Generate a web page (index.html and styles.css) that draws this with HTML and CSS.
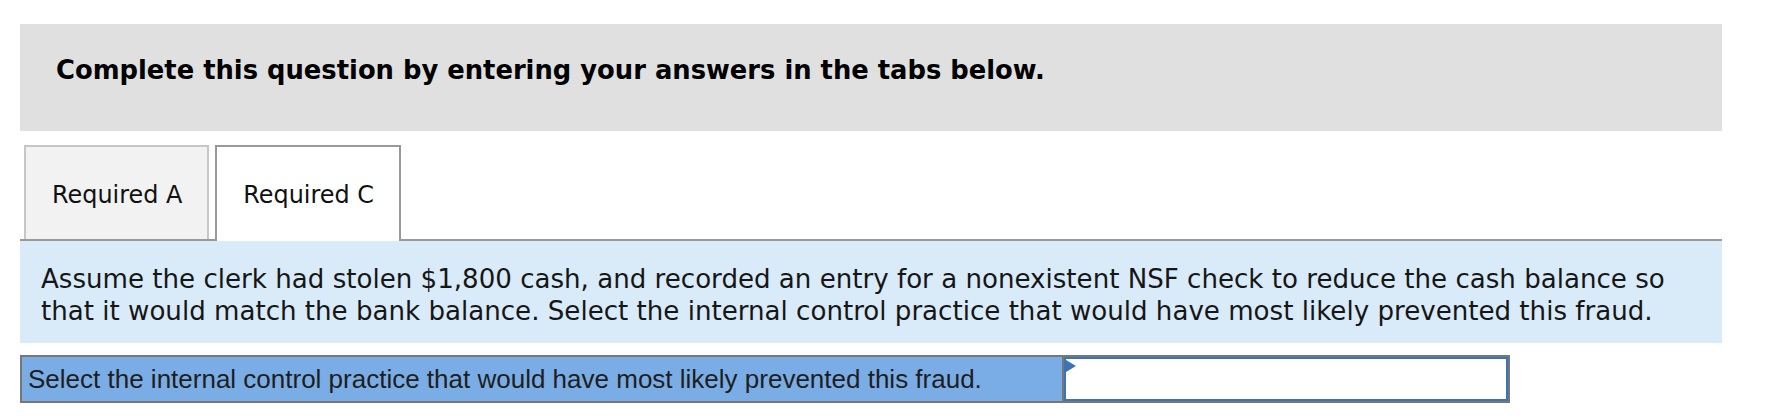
FILE: index.html
```html
<!DOCTYPE html>
<html lang="en">
<head>
<meta charset="utf-8">
<title>Complete this question</title>
<link rel="stylesheet" href="styles.css">
</head>
<body>
<div class="page">
  <div class="banner">Complete this question by entering your answers in the tabs below.</div>
  <div class="tabs">
    <div class="tab">Required A</div>
    <div class="tab tab-active">Required C</div>
  </div>
  <div class="question">Assume the clerk had stolen $1,800 cash, and recorded an entry for a nonexistent NSF check to reduce the cash balance so that it would match the bank balance. Select the internal control practice that would have most likely prevented this fraud.</div>
  <div class="answer-row">
    <div class="answer-label">Select the internal control practice that would have most likely prevented this fraud.</div>
    <div class="answer-input"><span class="marker"></span></div>
  </div>
</div>
</body>
</html>
```
FILE: styles.css
```css
html, body {
  margin: 0;
  padding: 0;
  background: #ffffff;
}
body {
  font-family: "DejaVu Sans", Verdana, sans-serif;
  color: #111111;
}
.page {
  padding: 24px 56px 0 20px;
}
.banner {
  box-sizing: border-box;
  height: 107px;
  background: #e0e0e0;
  padding: 31px 0 0 36px;
  font-weight: bold;
  font-size: 25.8px;
  line-height: 30px;
  color: #000000;
}
.tabs {
  margin-top: 14px;
  display: flex;
  align-items: flex-end;
  gap: 6px;
  padding-left: 4px;
  border-bottom: 2px solid #999999;
}
.tab {
  box-sizing: border-box;
  height: 94px;
  display: flex;
  align-items: center;
  padding: 4px 25px 0 26px;
  font-size: 23.9px;
  color: #111111;
  background: #f2f2f2;
  border: 2px solid #c6c6c6;
  border-bottom: 0;
}
.tab-active {
  background: #ffffff;
  border-color: #999999;
  height: 96px;
  margin-bottom: -2px;
  padding-bottom: 2px;
}
.question {
  background: #d9ebf9;
  padding: 22px 20px 16px 21px;
  font-size: 26.1px;
  line-height: 32px;
  color: #161616;
}
.answer-row {
  box-sizing: border-box;
  margin-top: 12px;
  width: 1490px;
  height: 48px;
  display: flex;
  border: 2px solid #777777;
}
.answer-label {
  box-sizing: border-box;
  width: 1042px;
  display: flex;
  align-items: center;
  padding-left: 6px;
  background: #7aade5;
  border-right: 2px solid #777777;
  font-family: "Liberation Sans", Arial, sans-serif;
  font-size: 26px;
  color: #1e1e1e;
  white-space: nowrap;
}
.answer-input {
  flex: 1;
  position: relative;
  background: #ffffff;
  border: 2px solid #3a73ba;
}
.marker {
  position: absolute;
  top: 1px;
  left: 0;
  width: 0;
  height: 0;
  border-top: 6px solid transparent;
  border-bottom: 6px solid transparent;
  border-left: 10px solid #3a73ba;
}
```
